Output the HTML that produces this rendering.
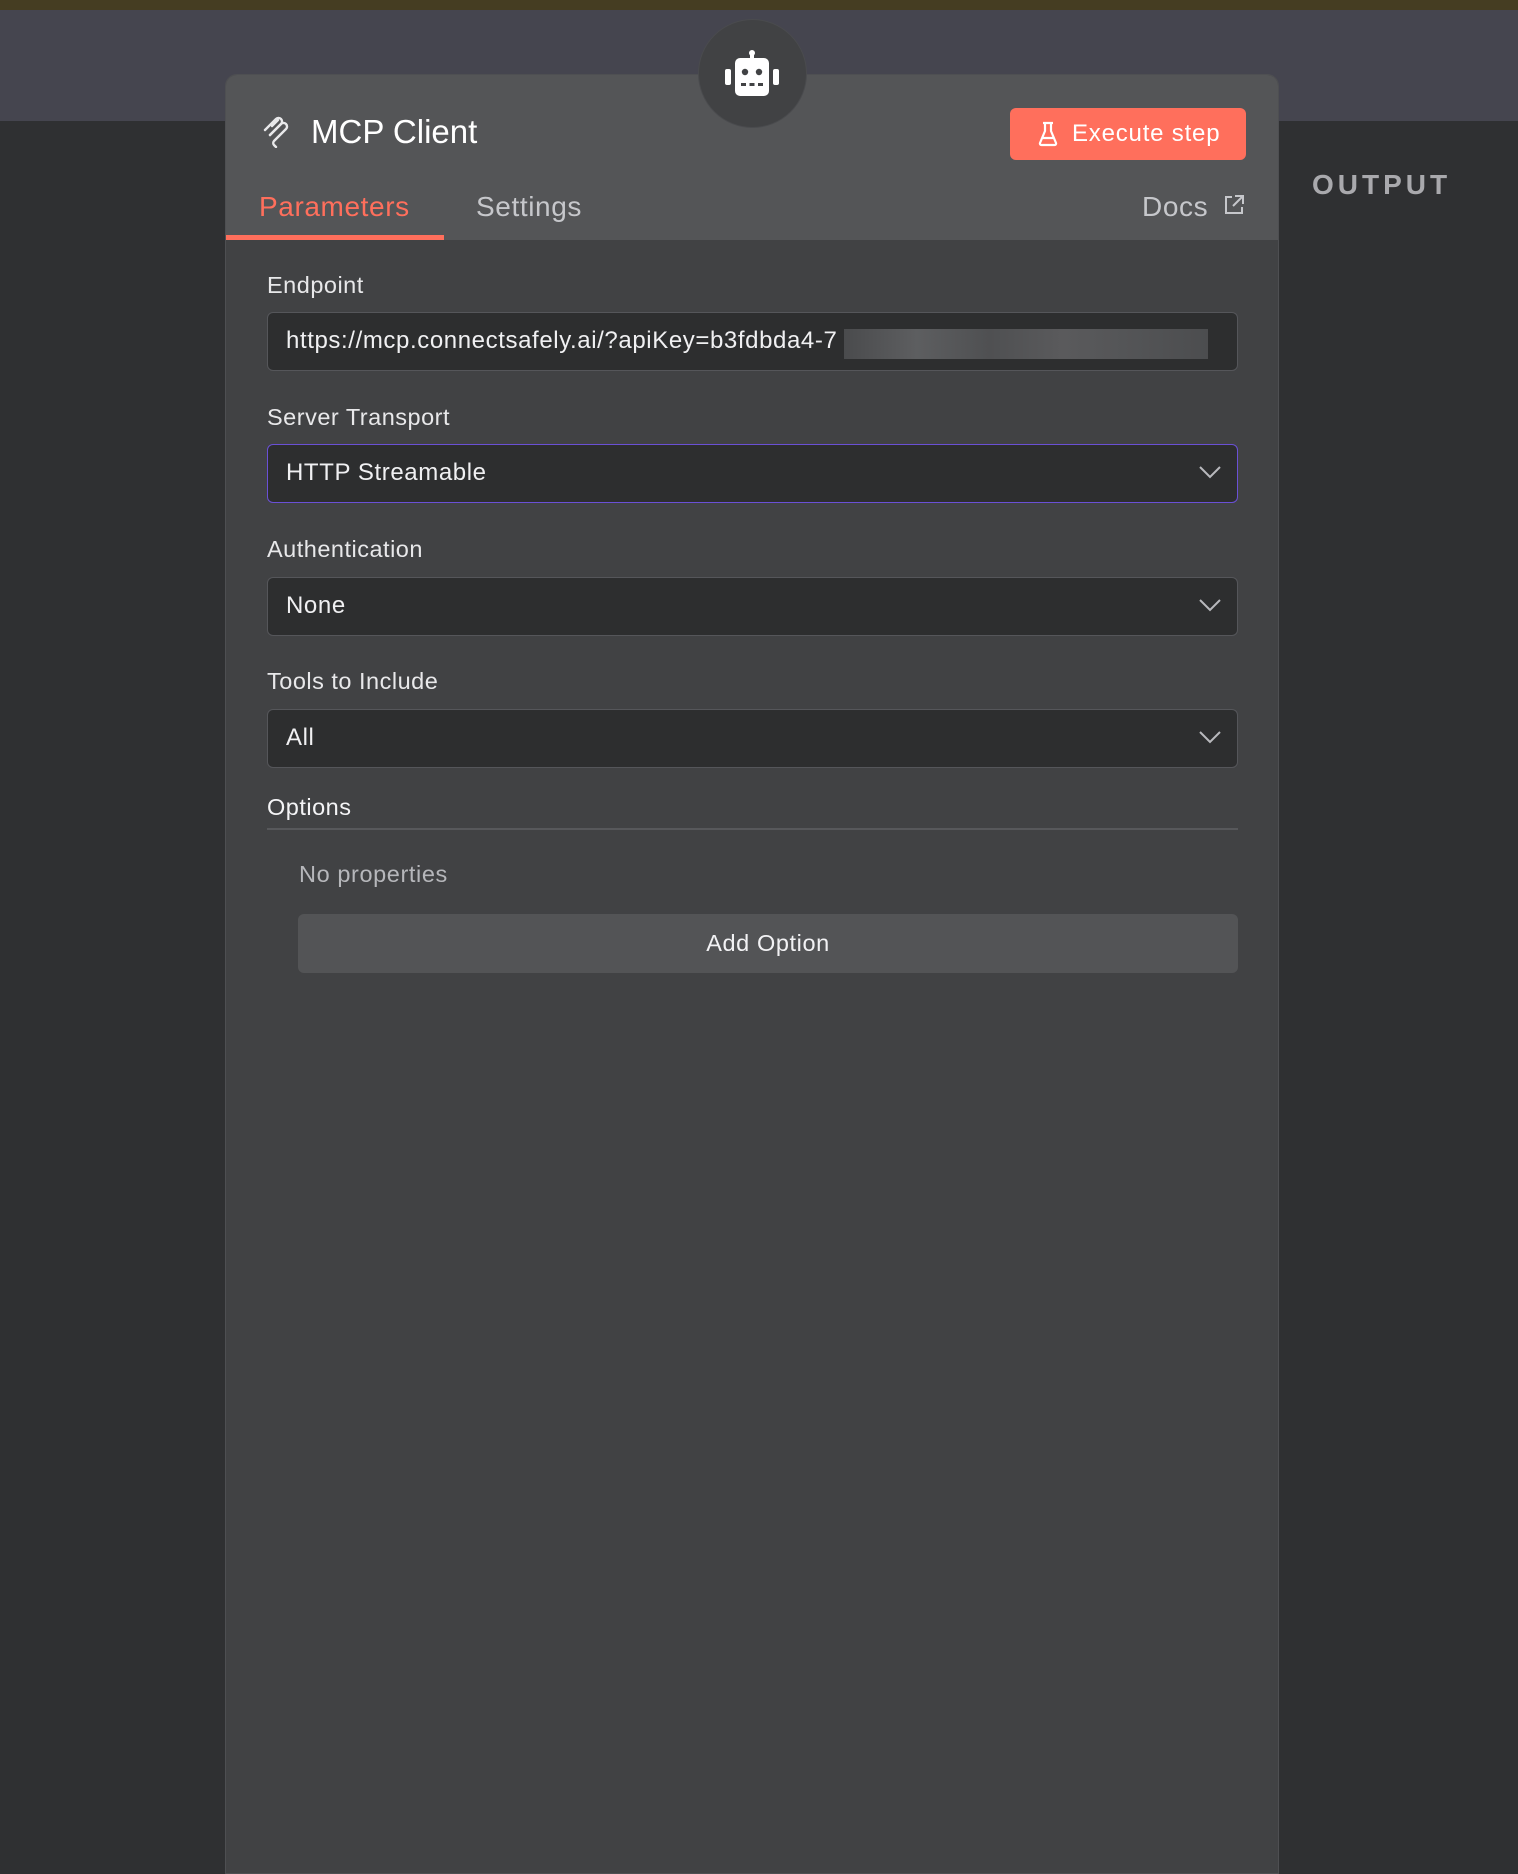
<!DOCTYPE html>
<html><head><meta charset="utf-8"><style>
*{box-sizing:border-box;margin:0;padding:0}
body{width:1518px;height:1854px;background:#2f3032;position:relative;overflow:hidden;font-family:"Liberation Sans",sans-serif;color:#f2f2f3}
.a{position:absolute}
.lbl{position:absolute;left:267px;font-size:23.5px;color:#e8e8ea;line-height:1;letter-spacing:0.5px}
.inp{position:absolute;left:267px;width:971px;height:59px;background:#2d2e2f;border:1.5px solid #55565a;border-radius:6px;font-size:24px;color:#f0f0f2;padding-left:18px;line-height:56px;letter-spacing:0.6px}
.chev{position:absolute;right:16px;top:20px}
</style></head><body>
<div class="a" style="left:0;top:0;width:1518px;height:10px;background:#453d22"></div>
<div class="a" style="left:0;top:10px;width:1518px;height:111px;background:#45454f"></div>
<div class="a" style="left:1312px;top:169px;font-size:28px;font-weight:bold;letter-spacing:4px;color:#a9a9ad">OUTPUT</div>
<div class="a" style="left:225px;top:74px;width:1054px;height:1800px;background:#414244;border:1px solid #4e4f52;border-radius:12px 12px 0 0;overflow:hidden">
 <div class="a" style="left:0;top:0;width:1054px;height:165px;background:#545557"></div>
</div>
<div class="a" style="left:698px;top:19px;width:109px;height:109px;border-radius:50%;background:#414244;border:1px solid #4a4b4e"></div>
<svg class="a" style="left:722px;top:50px" width="60" height="48" viewBox="0 0 60 48">
 <rect x="28" y="1" width="4" height="8" fill="#fff"/>
 <circle cx="30" cy="3" r="3" fill="#fff"/>
 <rect x="13" y="8" width="34" height="38" rx="5" fill="#fff"/>
 <rect x="3" y="19" width="6" height="16" rx="2" fill="#fff"/>
 <rect x="51" y="19" width="6" height="16" rx="2" fill="#fff"/>
 <circle cx="23" cy="22" r="3.2" fill="#414244"/><circle cx="37" cy="22" r="3.2" fill="#414244"/>
 <rect x="19" y="33" width="5" height="3" fill="#414244"/><rect x="27.5" y="33" width="5" height="3" fill="#414244"/><rect x="36" y="33" width="5" height="3" fill="#414244"/>
</svg>
<svg class="a" style="left:261px;top:114px" width="32" height="34" viewBox="0 0 32 34" fill="none" stroke="#e8e8ea" stroke-width="2.4" stroke-linecap="round">
 <path d="M4 16 L15 5 a3.5 3.5 0 0 1 5 5 L9 21"/><path d="M9 21 L20 10 a3.5 3.5 0 0 1 5 5 L13 27 a3 3 0 0 0 0 4 L15 33"/><path d="M11 12 L17 6"/>
</svg>
<div class="a" style="left:311px;top:113px;font-size:33px;color:#fff">MCP Client</div>
<div class="a" style="left:1010px;top:108px;width:236px;height:52px;background:#ff6f5c;border-radius:6px"></div>
<svg class="a" style="left:1037px;top:121px" width="22" height="26" viewBox="0 0 22 26" fill="none" stroke="#fff" stroke-width="2.2" stroke-linejoin="round"><path d="M6 2h10M8 2v8L3 22a1.5 1.5 0 0 0 1.5 2h13a1.5 1.5 0 0 0 1.5-2L14 10V2M5.5 17h11"/></svg>
<div class="a" style="left:1072px;top:120px;font-size:24px;color:#fff;letter-spacing:0.8px">Execute step</div>
<div class="a" style="left:259px;top:191px;font-size:28px;color:#ff6f5c;letter-spacing:0.6px">Parameters</div>
<div class="a" style="left:226px;top:235px;width:218px;height:5px;background:#ff6f5c"></div>
<div class="a" style="left:476px;top:191px;font-size:28px;color:#c6c7cb;letter-spacing:0.6px">Settings</div>
<div class="a" style="left:1142px;top:191px;font-size:28px;color:#c6c7cb;letter-spacing:0.6px">Docs</div>
<svg class="a" style="left:1223px;top:194px" width="22" height="22" viewBox="0 0 22 22" fill="none" stroke="#c6c7cb" stroke-width="2"><path d="M9 3H3v16h16v-6M12 2h8v8M20 2L10 12"/></svg>

<div class="lbl" style="top:274px">Endpoint</div>
<div class="inp" style="top:312px">https://mcp.connectsafely.ai/?apiKey=b3fdbda4-7</div>
<div class="a" style="left:844px;top:329px;width:364px;height:30px;background:linear-gradient(90deg,#4a4b4d,#5d5e60 20%,#4f5052 40%,#5a5a5c 60%,#535456 80%,#4c4d4f)"></div>
<div class="lbl" style="top:406px">Server Transport</div>
<div class="inp" style="top:444px;border-color:#6a50d6">HTTP Streamable<svg class="chev" width="22" height="14" viewBox="0 0 22 14" fill="none" stroke="#b8b9bd" stroke-width="2"><path d="M1 2l10 10L21 2"/></svg></div>
<div class="lbl" style="top:538px">Authentication</div>
<div class="inp" style="top:577px">None<svg class="chev" width="22" height="14" viewBox="0 0 22 14" fill="none" stroke="#b8b9bd" stroke-width="2"><path d="M1 2l10 10L21 2"/></svg></div>
<div class="lbl" style="top:670px">Tools to Include</div>
<div class="inp" style="top:709px">All<svg class="chev" width="22" height="14" viewBox="0 0 22 14" fill="none" stroke="#b8b9bd" stroke-width="2"><path d="M1 2l10 10L21 2"/></svg></div>
<div class="lbl" style="top:796px;color:#f4f4f6">Options</div>
<div class="a" style="left:267px;top:828px;width:971px;height:2px;background:#57585b"></div>
<div class="a" style="left:299px;top:861px;font-size:23.5px;color:#b6b7bb;letter-spacing:0.6px">No properties</div>
<div class="a" style="left:298px;top:914px;width:940px;height:59px;background:#535456;border-radius:6px;text-align:center;line-height:59px;font-size:23.5px;color:#f2f2f4;letter-spacing:0.6px">Add Option</div>
</body></html>
